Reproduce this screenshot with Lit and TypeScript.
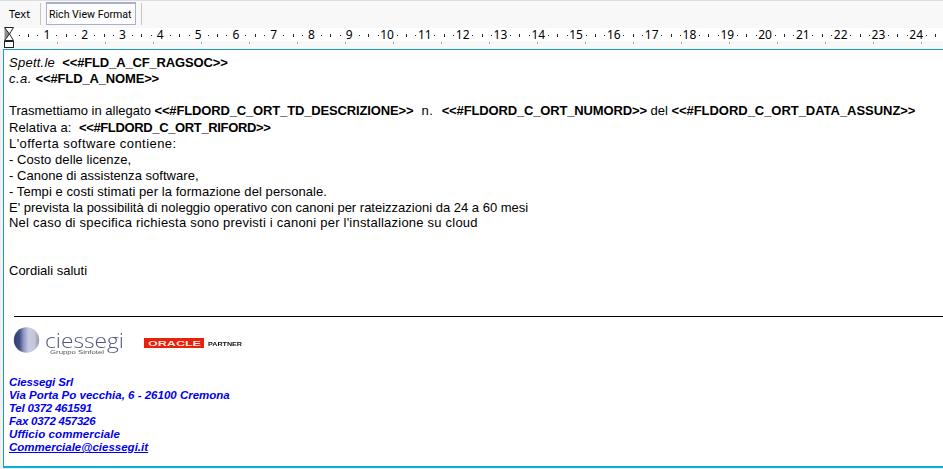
import { LitElement, html, css, svg } from "lit";
import { customElement } from "lit/decorators.js";

const CM = 37.8;

@customElement("app-root")
export class AppRoot extends LitElement {
  static styles = css`
    :host {
      display: block;
      width: 943px;
      height: 469px;
      background: #f0f0f0;
      overflow: hidden;
      font-family: "Liberation Sans", Arial, sans-serif;
      font-size: 13px;
      color: #000;
    }
    .tabs {
      height: 26px;
      box-sizing: border-box;
      border-top: 1px solid #dcdcdc;
      background: #f8f8f8;
      display: flex;
      align-items: stretch;
      padding: 1px 0 1px 9px;
      font-family: "Noto Sans", sans-serif;
      font-size: 11px;
      white-space: nowrap;
    }
    .tab { display: flex; align-items: center; }
    .tab.first { width: 31px; }
    .tab.active {
      width: 90px;
      box-sizing: border-box;
      margin: 0 5px;
      padding-left: 2px;
      border: 1px solid #aab0c8;
      border-top-width: 2px;
      background: #fdfdfd;
      font-family: "Roboto", sans-serif;
      font-size: 10.6px;
    }
    .sep { width: 1px; background: #c6c6c6; margin-top: 1px; }
    .rulerwrap { height: 23px; background: #f8f8f8; position: relative; }
    .ruler {
      position: relative;
      height: 13px;
      top: 2px;
      background: #fff;
      display: flex;
      padding-left: 28px;
      font-family: "Noto Sans", sans-serif;
      font-size: 12px;
      line-height: 13px;
      color: #000;
    }
    .num { flex: none; width: 37.8px; text-align: center; }
    .ticks { position: absolute; left: 0; top: 0; }
    .marker { position: absolute; left: 4px; top: 0; }
    .doc {
      height: 419px;
      box-sizing: border-box;
      background: #fff;
      border-top: 1px solid #1f9bc4;
      border-left: 1px solid #1f9bc4;
      margin-left: 3px;
      border-bottom: 2px solid #08b0dc;
      padding: 4px 0 0 5px;
      display: flex;
      flex-direction: column;
    }
    .l { height: 16px; line-height: 16px; white-space: pre; }
    .l.t { height: 17px; line-height: 17px; }
    .l.s { height: 15px; line-height: 15px; }
    .l b { letter-spacing: -0.15px; }
    .l i { letter-spacing: 0.25px; }
    .l i.ca { letter-spacing: 0.5px; }
    .l .no { letter-spacing: 0.5px; }
    .l b.data { letter-spacing: -0.04px; }
    .l b.rif { letter-spacing: -0.36px; }
    .l .rel { letter-spacing: 0.1px; }
    .ls03 { letter-spacing: 0.03px; }
    .ls07 { letter-spacing: 0.07px; }
    .ls22 { letter-spacing: 0.22px; }
    .ls43 { letter-spacing: 0.43px; }
    .rule { height: 1px; background: #000; margin: 37px 0 0 5px; flex: none; }
    .logos { display: block; height: 50px; flex: none; }
    .blur { filter: blur(0.35px); }
    .sig {
      margin-top: 9px;
      color: #0000f0;
      font-weight: bold;
      font-style: italic;
      font-size: 11.5px;
      line-height: 13px;
      white-space: pre;
    }
    .sig .name { letter-spacing: -0.15px; }
    .sig .tel { letter-spacing: -0.25px; }
    .sig .off { letter-spacing: 0.1px; }
  `;

  private ticks() {
    const items = [];
    for (let i = 0; i < 25; i++) {
      const x = 9.1 + i * CM;
      items.push(
        svg`<rect x=${Math.round(x + CM * 0.25)} y="9" width="1" height="1" fill="#222"/>
            <rect x=${Math.round(x + CM * 0.5)} y="8" width="1" height="3" fill="#222"/>
            <rect x=${Math.round(x + CM * 0.75)} y="9" width="1" height="1" fill="#222"/>`
      );
    }
    for (let i = 1; i < 20; i++) {
      items.push(svg`<rect x=${9 + i * 48} y="16" width="1" height="2" fill="#a0a0a0"/>`);
    }
    return items;
  }

  render() {
    const nums = Array.from({ length: 24 }, (_, i) => i + 1);
    return html`
      <div class="tabs">
        <div class="tab first">Text</div>
        <div class="sep"></div>
        <div class="tab active">Rich View Format</div>
        <div class="sep"></div>
      </div>
      <div class="rulerwrap">
        <div class="ruler">
          ${nums.map((n) => html`<div class="num">${n}</div>`)}
        </div>
        <svg class="ticks" width="943" height="23">${this.ticks()}</svg>
        <svg class="marker" width="11" height="23" viewBox="0 0 11 23">
          <path d="M0.5 1.5 L5.5 8 L0.5 14.5 Z" fill="#8c8c8c"/>
          <path d="M0.5 1.5 H9.5 L5.5 8 L9.5 14.5 H0.5 L5.5 8 Z" fill="none" stroke="#222" stroke-width="1"/>
          <rect x="0.5" y="15.5" width="9" height="6" fill="#fff" stroke="#222" stroke-width="1"/>
        </svg>
      </div>
      <div class="doc">
        <div class="body">
          <div class="l t"><i>Spett.le</i>  <b>&lt;&lt;#FLD_A_CF_RAGSOC&gt;&gt;</b></div>
          <div class="l"><i class="ca">c.a.</i> <b>&lt;&lt;#FLD_A_NOME&gt;&gt;</b></div>
          <div class="l"></div>
          <div class="l">Trasmettiamo in allegato <b>&lt;&lt;#FLDORD_C_ORT_TD_DESCRIZIONE&gt;&gt;</b><span class="no">  n.  </span><b>&lt;&lt;#FLDORD_C_ORT_NUMORD&gt;&gt;</b> del <b class="data">&lt;&lt;#FLDORD_C_ORT_DATA_ASSUNZ&gt;&gt;</b></div>
          <div class="l t"><span class="rel">Relativa a:  </span><b class="rif">&lt;&lt;#FLDORD_C_ORT_RIFORD&gt;&gt;</b></div>
          <div class="l ls43">L'offerta software contiene:</div>
          <div class="l ls07">- Costo delle licenze,</div>
          <div class="l ls03">- Canone di assistenza software,</div>
          <div class="l ls07">- Tempi e costi stimati per la formazione del personale.</div>
          <div class="l s">E' prevista la possibilità di noleggio operativo con canoni per rateizzazioni da 24 a 60 mesi</div>
          <div class="l ls22">Nel caso di specifica richiesta sono previsti i canoni per l'installazione su cloud</div>
          <div class="l"></div>
          <div class="l"></div>
          <div class="l">Cordiali saluti</div>
        </div>
        <div class="rule"></div>
        <svg class="logos" width="260" height="50" viewBox="0 0 260 50">
          <defs>
            <linearGradient id="g" x1="0" x2="1" y1="0" y2="0">
              <stop offset="0" stop-color="#333d70"/>
              <stop offset="0.22" stop-color="#414c80"/>
              <stop offset="0.38" stop-color="#8d95bf"/>
              <stop offset="0.58" stop-color="#c6cbe0"/>
              <stop offset="0.82" stop-color="#c4c6d8"/>
              <stop offset="1" stop-color="#8f92a8"/>
            </linearGradient>
          </defs>
          <circle cx="17.5" cy="23" r="12.7" fill="url(#g)"/>
          <g class="blur">
            <text x="36" y="31.3" font-family="Open Sans" font-weight="300" font-size="21" fill="#53587d" textLength="79" lengthAdjust="spacingAndGlyphs">ciessegi</text>
            <text x="41" y="37" font-family="Liberation Sans" font-size="4.5" fill="#555" textLength="54" lengthAdjust="spacingAndGlyphs">Gruppo Sinfotel</text>
          </g>
          <rect x="135" y="21" width="60" height="10" fill="#e8200c"/>
          <g class="blur">
            <text x="139" y="28.8" font-family="Liberation Sans" font-size="7.5" font-weight="bold" fill="#ffe8e0" textLength="53" lengthAdjust="spacingAndGlyphs">ORACLE</text>
            <text x="199" y="28.5" font-family="Liberation Sans" font-size="6" font-weight="bold" fill="#111" textLength="34" lengthAdjust="spacingAndGlyphs">PARTNER</text>
          </g>
        </svg>
        <div class="sig"><span class="name">Ciessegi Srl</span>
Via Porta Po vecchia, 6 - 26100 Cremona
<span class="tel">Tel 0372 461591</span>
<span class="tel">Fax 0372 457326</span>
<span class="off">Ufficio commerciale</span>
<u>Commerciale@ciessegi.it</u></div>
      </div>
    `;
  }
}
